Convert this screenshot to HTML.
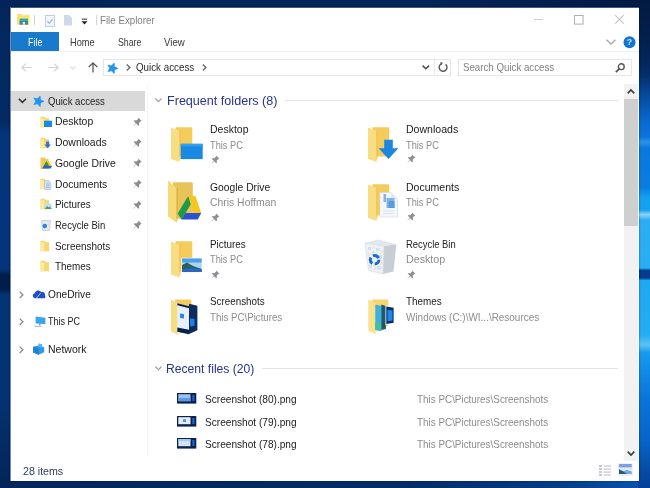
<!DOCTYPE html>
<html lang="en"><head><meta charset="utf-8"><title>File Explorer</title>
<style>
html,body{margin:0;padding:0}
body{width:650px;height:488px;position:relative;overflow:hidden;background:#0a2656;font-family:"Liberation Sans",sans-serif}
.t{position:absolute;white-space:pre;line-height:1;transform-origin:0 0;display:block}
.a{position:absolute;display:block}
svg{position:absolute;overflow:visible}

</style></head>
<body>
<div class="a" style="left:0px;top:0px;width:650px;height:488px;background:linear-gradient(90deg,#03265c 0px,#042c66 400px,#053c88 560px,#0656b4 650px);"></div>
<div class="a" style="left:0px;top:0px;width:650px;height:8px;background:linear-gradient(90deg,#03245a,#032558 420px,#032050 520px,#021a42 650px);"></div>
<div class="a" style="left:0px;top:0px;width:11px;height:488px;background:linear-gradient(180deg,#03245a 0px,#032960 40px,#032a62 122px,#04347a 134px,#04357c 269px,#021d4a 275px,#021d4a 289px,#043476 295px,#043272 400px,#042a62 450px,#032558 488px);"></div>
<div class="a" style="left:638px;top:0px;width:12px;height:488px;background:linear-gradient(180deg,#021a40 0px,#03204e 40px,#03265c 62px,#04306c 76px,#0650a8 100px,#0868cc 120px,#0a74dc 137px,#2c92e8 142px,#0a78dc 148px,#0a7ee0 188px,#12a0f0 197px,#14a2f0 210px,#8ad4fa 214.500px,#2cacf3 220px,#28aef4 268px,#053c90 270.500px,#053c90 278px,#1ea8f2 280.500px,#24acf4 335px,#5cc2f8 345px,#1a9cee 352px,#1290e8 365px,#0a74d8 400px,#0764c8 440px,#054ca6 470px,#05409a 488px);"></div>
<div class="a" id="win" style="left:0;top:0;width:650px;height:488px;filter:blur(0.55px)">
<div class="a" style="left:10px;top:7px;width:629px;height:474px;background:#fff;box-sizing:border-box;border-left:1px solid #7688ab;border-top:1px solid #44597f;box-shadow:0 0 2px 0.300px rgba(0,8,34,.5);"></div>
<svg style="left:16.8px;top:14px" width="13" height="11" viewBox="0 0 13 11"><path d="M0 1.2h12.5v9.500h-12.500z" fill="#fce46c"/><path d="M0 0.200h4.500l1 1h-5.500z" fill="#f5cf55"/><path d="M7.500 0.600h5v1h-5z" fill="#f8e48c"/><rect x="2.600" y="4.600" width="8.400" height="3" fill="#3aa89a"/><rect x="2.600" y="7" width="8.400" height="3.700" fill="#2a86c8"/><rect x="5.700" y="7.800" width="2.300" height="2.900" fill="#fbe88e"/></svg>
<div class="a" style="left:34px;top:14.5px;width:1px;height:10px;background:#d4d4d4;"></div>
<div class="a" style="left:95.5px;top:14.5px;width:1px;height:10px;background:#d4d4d4;"></div>
<svg style="left:45px;top:14.5px" width="10" height="12" viewBox="0 0 10 12"><rect x="0.5" y="0.5" width="9" height="11" fill="#f3f6fc" stroke="#c2cee8"/><path d="M2.4 6.2l2 2.1 3.4-4.3" fill="none" stroke="#abbce2" stroke-width="1.4"/></svg>
<svg style="left:64.2px;top:14.8px" width="8" height="10.5" viewBox="0 0 8 10.5"><path d="M0 0h5l3 3v7.500h-8z" fill="#cfd9ec"/></svg>
<svg style="left:80.7px;top:18px" width="7" height="8" viewBox="0 0 7 8"><rect x="0.8" y="0.6" width="5.4" height="1.1" fill="#444"/><path d="M0.5 3.2h6l-3 3.3z" fill="#222"/></svg>
<div class="a" style="left:534.3px;top:19.3px;width:9px;height:1px;background:#cccccc;"></div>
<svg style="left:573.5px;top:15px" width="10" height="10" viewBox="0 0 10 10"><rect x="0.5" y="0.5" width="8.6" height="8.6" fill="none" stroke="#b0b0b0" stroke-width="1"/></svg>
<svg style="left:614.7px;top:15.4px" width="9" height="9" viewBox="0 0 9 9"><path d="M0.200 0.200l8.500 8.500M8.700 0.200l-8.500 8.500" fill="none" stroke="#c2c2c2" stroke-width="1.100"/></svg>
<div class="a" style="left:11px;top:32px;width:47.8px;height:19.4px;background:#1979ca;"></div>
<div class="a" style="left:11px;top:51px;width:627.5px;height:1px;background:#f0f0f1;"></div>
<svg style="left:605.8px;top:38.9px" width="10" height="6" viewBox="0 0 10 6"><path d="M0.500 0.700l4.500 4.300 4.500-4.300" fill="none" stroke="#a9a9a9" stroke-width="1.300"/></svg>
<svg style="left:623.3px;top:36px" width="13" height="13" viewBox="0 0 13 13"><circle cx="6.500" cy="6.200" r="6" fill="#1275d6"/><text x="6.500" y="9.400" text-anchor="middle" font-family="Liberation Sans, sans-serif" font-size="8.800" font-weight="bold" fill="#cfe6ff">?</text></svg>
<svg style="left:21px;top:62.5px" width="11" height="9" viewBox="0 0 11 9"><path d="M10.6 4.5H1M4.8 0.6L0.9 4.5l3.9 3.9" fill="none" stroke="#d2d2d2" stroke-width="1.2"/></svg>
<svg style="left:47.5px;top:62.5px" width="11" height="9" viewBox="0 0 11 9"><path d="M0.4 4.5H10M6.2 0.6l3.9 3.9-3.9 3.9" fill="none" stroke="#d2d2d2" stroke-width="1.2"/></svg>
<svg style="left:70px;top:66px" width="6" height="4" viewBox="0 0 6 4"><path d="M0.5 0.5l2.5 2.5 2.5-2.5" fill="none" stroke="#dcdcdc" stroke-width="1.1"/></svg>
<svg style="left:87.5px;top:61.8px" width="10" height="11" viewBox="0 0 10 11"><path d="M5 10.4V1M0.8 5l4.2-4.2 4.2 4.2" fill="none" stroke="#5a5a5a" stroke-width="1.3"/></svg>
<div class="a" style="left:103px;top:59px;width:347.5px;height:17px;background:#fff;box-sizing:border-box;border:1px solid #e6e6e6;"></div>
<div class="a" style="left:434px;top:60px;width:1px;height:15px;background:#ececec;"></div>
<svg style="left:106.6px;top:62.8px" width="11" height="11" viewBox="0 0 11 11"><path d="M7.13 -0.03L7.58 3.71L11.00 5.30L7.58 6.89L7.13 10.63L4.57 7.87L0.87 8.59L2.70 5.30L0.87 2.01L4.57 2.73z" fill="#2196ee" stroke="#2196ee" stroke-width=".6" stroke-linejoin="round"/></svg>
<svg style="left:125.5px;top:64.2px" width="5" height="7" viewBox="0 0 5 7"><path d="M0.8 0.6l3 2.9-3 2.9" fill="none" stroke="#6a6a6a" stroke-width="1.4"/></svg>
<svg style="left:201.5px;top:64.2px" width="5" height="7" viewBox="0 0 5 7"><path d="M0.8 0.6l3 2.9-3 2.9" fill="none" stroke="#6a6a6a" stroke-width="1.4"/></svg>
<svg style="left:421.8px;top:65.2px" width="8" height="5" viewBox="0 0 8 5"><path d="M0.6 0.6l3.2 3.2L7 0.6" fill="none" stroke="#4d4d4d" stroke-width="1.5"/></svg>
<svg style="left:437.5px;top:62.3px" width="10" height="11" viewBox="0 0 10 11"><path d="M7.6 2.4A3.9 3.9 0 1 1 3.3 1.9" fill="none" stroke="#555" stroke-width="1.4"/><path d="M2 0.2l2.9 0.3-1.4 2.7z" fill="#555"/></svg>
<div class="a" style="left:458px;top:59px;width:173.5px;height:17px;background:#fff;box-sizing:border-box;border:1px solid #e6e6e6;"></div>
<svg style="left:614.5px;top:62.5px" width="10" height="10" viewBox="0 0 10 10"><circle cx="6.3" cy="3.7" r="2.9" fill="none" stroke="#555" stroke-width="1.4"/><path d="M4.2 5.8L0.8 9.2" stroke="#555" stroke-width="1.8" fill="none"/></svg>
<div class="a" style="left:11px;top:90.6px;width:133.8px;height:20.4px;background:#d9d9d9;"></div>
<div class="a" style="left:147px;top:84px;width:1px;height:372px;background:#f4f4f4;"></div>
<svg style="left:17.5px;top:98.3px" width="9" height="6" viewBox="0 0 9 6"><path d="M0.8 0.8l3.6 3.6L8 0.8" fill="none" stroke="#333" stroke-width="1.5"/></svg>
<svg style="left:33.2px;top:96px" width="11" height="11" viewBox="0 0 11 11"><path d="M7.13 -0.03L7.58 3.71L11.00 5.30L7.58 6.89L7.13 10.63L4.57 7.87L0.87 8.59L2.70 5.30L0.87 2.01L4.57 2.73z" fill="#2196ee" stroke="#2196ee" stroke-width=".6" stroke-linejoin="round"/></svg>
<svg style="left:18.5px;top:290.5px" width="5" height="8" viewBox="0 0 5 8"><path d="M0.7 0.6l3.2 3.2-3.2 3.2" fill="none" stroke="#8a8a8a" stroke-width="1.300"/></svg>
<svg style="left:18.5px;top:318.2px" width="5" height="8" viewBox="0 0 5 8"><path d="M0.7 0.6l3.2 3.2-3.2 3.2" fill="none" stroke="#8a8a8a" stroke-width="1.300"/></svg>
<svg style="left:18.5px;top:345.7px" width="5" height="8" viewBox="0 0 5 8"><path d="M0.7 0.6l3.2 3.2-3.2 3.2" fill="none" stroke="#8a8a8a" stroke-width="1.300"/></svg>
<svg style="left:133px;top:117.1px" width="9.2" height="9.7" viewBox="0 0 8 8.500"><path d="M4.6 0.4l3 3-.9.3-1.5 1.6.2 1.7-.8.7-1.9-1.9L.5 8 .3 7.7l2.2-2.2L.6 3.600l.7-.8 1.700.2L4.600 1.500z" fill="#8c8c8c"/></svg>
<svg style="left:133px;top:137.7px" width="9.2" height="9.7" viewBox="0 0 8 8.500"><path d="M4.6 0.4l3 3-.9.3-1.5 1.6.2 1.7-.8.7-1.9-1.9L.5 8 .3 7.7l2.2-2.2L.6 3.600l.7-.8 1.700.2L4.600 1.500z" fill="#8c8c8c"/></svg>
<svg style="left:133px;top:158.29999999999998px" width="9.2" height="9.7" viewBox="0 0 8 8.500"><path d="M4.6 0.4l3 3-.9.3-1.5 1.6.2 1.7-.8.7-1.9-1.9L.5 8 .3 7.7l2.2-2.2L.6 3.600l.7-.8 1.700.2L4.600 1.500z" fill="#8c8c8c"/></svg>
<svg style="left:133px;top:178.9px" width="9.2" height="9.7" viewBox="0 0 8 8.500"><path d="M4.6 0.4l3 3-.9.3-1.5 1.6.2 1.7-.8.7-1.9-1.9L.5 8 .3 7.7l2.2-2.2L.6 3.600l.7-.8 1.700.2L4.600 1.500z" fill="#8c8c8c"/></svg>
<svg style="left:133px;top:199.5px" width="9.2" height="9.7" viewBox="0 0 8 8.500"><path d="M4.6 0.4l3 3-.9.3-1.5 1.6.2 1.7-.8.7-1.9-1.9L.5 8 .3 7.7l2.2-2.2L.6 3.600l.7-.8 1.700.2L4.600 1.500z" fill="#8c8c8c"/></svg>
<svg style="left:133px;top:220.1px" width="9.2" height="9.7" viewBox="0 0 8 8.500"><path d="M4.6 0.4l3 3-.9.3-1.5 1.6.2 1.7-.8.7-1.9-1.9L.5 8 .3 7.7l2.2-2.2L.6 3.600l.7-.8 1.700.2L4.600 1.500z" fill="#8c8c8c"/></svg>
<svg style="left:40px;top:116px" width="12" height="12" viewBox="0 0 12 12"><path d="M0.5 0.8h4.3l1.2 1.4h3v9h-8.500z" fill="#f8d771"/><path d="M0.5 2.200h3.800v8.600l-3.800.4z" fill="#fde9a0"/><rect x="4" y="4.700" width="8" height="6.300" fill="#1b8be2"/></svg>
<svg style="left:40px;top:136.6px" width="12" height="12" viewBox="0 0 12 12"><path d="M0.5 0.8h4.3l1.2 1.4h3v9h-8.500z" fill="#f8d771"/><path d="M0.5 2.200h3.800v8.600l-3.800.4z" fill="#fde9a0"/><path d="M6.200 4.600h3v3h1.800l-3.300 3.600-3.300-3.600h1.800z" fill="#2a78d0"/></svg>
<svg style="left:39.5px;top:156.7px" width="13" height="13" viewBox="0 0 13 13"><path d="M0.5 0.500h4.300l1.200 1.400h2.500v10h-8z" fill="#f0c95a"/><path d="M6.500 4l3 5h-6z" fill="#3a8f3a"/><path d="M6.500 4l2.200 0 3.300 5.400h-2.500z" fill="#f5c518"/><path d="M3.500 9h8.500l-1.300 2.500h-8.500z" fill="#2a62c8"/></svg>
<svg style="left:40px;top:177.8px" width="12" height="12" viewBox="0 0 12 12"><path d="M0.5 0.8h4.3l1.2 1.4h3v9h-8.500z" fill="#f8d771"/><path d="M0.5 2.200h3.800v8.600l-3.800.4z" fill="#fde9a0"/><path d="M4.600 2.800h4.200l2 2v6.700h-6.200z" fill="#cfe0f4" stroke="#a9c0de" stroke-width=".6"/><path d="M6 6h3.500M6 7.800h3.500M6 9.500h3.500" stroke="#8fb0de" stroke-width=".7"/></svg>
<svg style="left:40px;top:198.4px" width="12" height="12" viewBox="0 0 12 12"><path d="M0.5 0.8h4.3l1.2 1.4h3v9h-8.500z" fill="#f8d771"/><path d="M0.5 2.200h3.800v8.600l-3.800.4z" fill="#fde9a0"/><rect x="4.600" y="5.500" width="7" height="5.500" fill="#bfe0f5"/><path d="M4.600 11l2.500-3 1.800 1.600 1.200-1 1.500 2.400z" fill="#4f9a6a"/></svg>
<svg style="left:40px;top:219px" width="12" height="12" viewBox="0 0 12 12"><path d="M1.500 1.500h9l-1.200 10h-6.600z" fill="#e4e9ee" stroke="#b9c2cc" stroke-width=".7"/><circle cx="4.800" cy="7" r="2.300" fill="#2d86d8"/></svg>
<svg style="left:40px;top:239.6px" width="12" height="12" viewBox="0 0 12 12"><path d="M0.5 0.8h4.3l1.2 1.4h3v9h-8.500z" fill="#f8d771"/><path d="M0.5 2.200h3.800v8.600l-3.800.4z" fill="#fde9a0"/></svg>
<svg style="left:40px;top:260.2px" width="12" height="12" viewBox="0 0 12 12"><path d="M0.5 0.8h4.3l1.2 1.4h3v9h-8.500z" fill="#f8d771"/><path d="M0.5 2.200h3.800v8.600l-3.800.4z" fill="#fde9a0"/></svg>
<svg style="left:32px;top:289.5px" width="13.5" height="8.5" viewBox="0 0 13.5 8.5"><path d="M3 8.300a2.600 2.600 0 0 1-.3-5.100A3.600 3.600 0 0 1 9.200 2 3 3 0 0 1 13 5.300a1.800 1.800 0 0 1-1.200 3z" fill="#1f4fc6"/><path d="M4.200 8.300L8.600 3.200" stroke="#fff" stroke-width=".7"/></svg>
<svg style="left:33px;top:316px" width="13" height="11.5" viewBox="0 0 13 11.5"><path d="M2.600 0.500l9.800 1.200v6.600l-9.800-.8z" fill="#3aa6ea"/><path d="M0.500 9.600l7.500.6 2 .9-7.800-.3z" fill="#9fb6c8"/><path d="M6 7.800l1.500.1v1.800l-1.500-.1z" fill="#7f9fb8"/></svg>
<svg style="left:32px;top:342.5px" width="13" height="12.5" viewBox="0 0 13 12.5"><path d="M1.200 3.800l6-1.600 5 2v5l-5.500 2.600-5.500-2.400z" fill="#2d9be6"/><path d="M6.500 0.300l3.500 1 0 3.200-3.500-.8z" fill="#56b4f0"/><path d="M1.200 3.800l5.500 1.800v6.200l-5.500-2.400z" fill="#1b82d6"/></svg>
<svg style="left:155.3px;top:98.2px" width="7" height="5" viewBox="0 0 7 5"><path d="M0.400 0.500l3.100 3.200L6.600 0.500" fill="none" stroke="#a4a4a4" stroke-width="1.200"/></svg>
<svg style="left:155.3px;top:366px" width="7" height="5" viewBox="0 0 7 5"><path d="M0.400 0.500l3.100 3.200L6.600 0.500" fill="none" stroke="#a4a4a4" stroke-width="1.200"/></svg>
<div class="a" style="left:285px;top:100px;width:333px;height:1px;background:#e5e5e5;"></div>
<div class="a" style="left:261.5px;top:368px;width:356.5px;height:1px;background:#e5e5e5;"></div>
<svg style="left:171.2px;top:127.3px" width="34" height="35.5" viewBox="0 0 34 35.5"><path d="M4.5 0.300h16.0l.8 .8v28.5h-16.8z" fill="#f4cc5c"/><path d="M0 0.500l8.5 3.200v31.3l-8.5-3z" fill="#f9dd82"/><path d="M8.5 3.700l1-.5v28.0l-1 2.800z" fill="#ecc050"/><rect x="9.700" y="16.800" width="22" height="15.300" fill="#198ae4"/><rect x="9.700" y="16.800" width="22" height="2.500" fill="#349ff0"/></svg>
<svg style="left:367.6px;top:126.8px" width="34" height="35.5" viewBox="0 0 34 35.5"><path d="M4.5 0.300h16.0l.8 .8v28.5h-16.8z" fill="#f4cc5c"/><path d="M0 0.500l8.5 3.200v31.3l-8.5-3z" fill="#f9dd82"/><path d="M8.5 3.700l1-.5v28.0l-1 2.800z" fill="#ecc050"/><path d="M16.200 12.800h8.600v8.400h5.600l-9.900 10.800-9.900-10.800h5.600z" fill="#1d86e0"/></svg>
<svg style="left:166.5px;top:179.5px" width="36" height="44" viewBox="0 0 36 44"><path d="M6 2.200h19l.8 1v35.500h-19.800z" fill="#e7c359"/><path d="M1 0.300l8.600 8v34.500l-8.600-6.300z" fill="#f5da76"/><path d="M9.600 8.300l1-.3v31l-1 3.800z" fill="#d9ab3c"/><path d="M21.200 16l-10.500 17.500 3.800 6 10.700-17.500z" fill="#1d9a48"/><path d="M21.200 16h7.300l5.700 17h-7.900z" fill="#f6c61e"/><path d="M14.500 39.500l3.900-6.500h15.800l-3.400 6.500z" fill="#2a52cf"/></svg>
<svg style="left:367.6px;top:183.8px" width="34" height="37.5" viewBox="0 0 34 37.5"><path d="M4.5 0.300h16.0l.8 .8v30.5h-16.8z" fill="#f4cc5c"/><path d="M0 0.500l8.5 3.200v33.3l-8.5-3z" fill="#f9dd82"/><path d="M8.5 3.700l1-.5v30.0l-1 2.800z" fill="#ecc050"/><path d="M12 8.500h11l6.500 6.500v18h-17.500z" fill="#f4f8fd" stroke="#d3dcea" stroke-width=".7"/><path d="M23 8.500v6.500h6.500z" fill="#e0e8f3"/><rect x="18.500" y="14" width="8" height="10" fill="#7db6ea"/><rect x="20.500" y="17" width="6" height="7" fill="#5a9ade"/><rect x="15.500" y="10" width="2.600" height="8" fill="#8db2e2"/><path d="M15 27h11.500M15 29.500h11.500" stroke="#dbe3ee" stroke-width="1"/></svg>
<svg style="left:171.2px;top:241px" width="34" height="37" viewBox="0 0 34 37"><path d="M4.5 0.300h16.0l.8 .8v30h-16.8z" fill="#f4cc5c"/><path d="M0 0.500l8.5 3.200v32.8l-8.5-3z" fill="#f9dd82"/><path d="M8.5 3.700l1-.5v29.5l-1 2.800z" fill="#ecc050"/><rect x="10.300" y="16.800" width="21" height="15" fill="#fff"/><rect x="11" y="17.500" width="19.600" height="13.600" fill="#a8d4f4"/><rect x="11" y="17.500" width="19.600" height="4" fill="#4c9fe8"/><path d="M11 31.100v-7l5-2.500 6 3.500 8.600 3v3z" fill="#2c5f5e"/><path d="M11 31.100v-2.500l9-1.500 10.600 1v3z" fill="#2a68c4"/></svg>
<svg style="left:364px;top:239px" width="34" height="37" viewBox="0 0 34 37"><path d="M1 4l19 3-1 28-14.500-3.500z" fill="#edf2f7"/><path d="M20 7l12.400-1.700-2.900 27.200-10.500 2.500z" fill="#c9ced6"/><path d="M1 4l13-3.500 18.400 4.800-12.400 1.700z" fill="#e1e7ee"/><path d="M1 4l19 3-1 28-14.500-3.500z" fill="none" stroke="#d2d9e1" stroke-width=".6"/><g fill="#cfe2f6"><rect x="4" y="8" width="3" height="3"/><rect x="12" y="9" width="3.500" height="3"/><rect x="15" y="16" width="3" height="4"/><rect x="5" y="26" width="3" height="3"/><rect x="13" y="27" width="4" height="3.500"/><rect x="8" y="12" width="2.500" height="2.500"/></g><g fill="#f6e3d6"><rect x="8.500" y="7.500" width="2.500" height="2.500"/><rect x="16" y="11.500" width="2.500" height="3"/><rect x="9.500" y="28" width="3" height="3"/><rect x="3.500" y="14" width="2.500" height="3"/><rect x="16" y="22.500" width="2.500" height="3"/></g><circle cx="10.600" cy="20.800" r="4.300" fill="none" stroke="#1a6ccc" stroke-width="3" stroke-dasharray="6.500 2.500"/></svg>
<svg style="left:171.2px;top:298.6px" width="30" height="38" viewBox="0 0 30 38"><path d="M4 0.500h15.500l.8 .8v28h-16.300z" fill="#f4cc5c"/><path d="M0 0.700l7.300 3v32l-7.300-3z" fill="#f9dd82"/><path d="M6.300 4.200l11.700 3v28l-11.700-2.500z" fill="#e7effa"/><path d="M6.300 4.200l11.700 3v2l-11.700-3z" fill="#0b2048"/><path d="M6.300 28.500l11.700 2.200v4.500l-11.700-2.500z" fill="#0b2048"/><path d="M9 14.500l4 .6v4.400l-4-.4z" fill="#2f86dc"/><path d="M18 4.800l8.400 2v24.500l-8.400 3.700z" fill="#0d2b5e"/><path d="M19 19.500l4.500 .3v7l-4.500 .8z" fill="#1c82e2"/></svg>
<svg style="left:367.8px;top:298.6px" width="30" height="38" viewBox="0 0 30 38"><path d="M4 0.500h15.500l.8 .8v26h-16.300z" fill="#f6d56e"/><path d="M0.300 0.700l7.300 3v31l-7.300-3z" fill="#fae18c"/><path d="M7.300 5.500l6 1.500v25l-6-1z" fill="#3cb2e2"/><path d="M7.300 23l6 1v8l-6-1z" fill="#46bea0"/><path d="M13.300 5.500l4.600 1.500v23l-4.600 1z" fill="#1c5870"/><path d="M17.500 6.500l8.800 1.500v16.500l-8.800 1.500z" fill="#f4f7fb"/><path d="M18.300 7.500l7.300 1.200v15l-7.300 1.200z" fill="#0b2c66"/><path d="M19.500 11l5 .6v10l-5 .6z" fill="#1b8af0"/></svg>
<svg style="left:210.8px;top:154.7px" width="9" height="9" viewBox="0 0 8 8.500"><path d="M4.6 0.4l3 3-.9.3-1.5 1.6.2 1.7-.8.7-1.9-1.9L.5 8 .3 7.7l2.2-2.2L.6 3.600l.7-.8 1.700.2L4.600 1.500z" fill="#8c9096"/></svg>
<svg style="left:210.8px;top:212.5px" width="9" height="9" viewBox="0 0 8 8.500"><path d="M4.6 0.4l3 3-.9.3-1.5 1.6.2 1.7-.8.7-1.9-1.9L.5 8 .3 7.7l2.2-2.2L.6 3.600l.7-.8 1.700.2L4.600 1.500z" fill="#8c9096"/></svg>
<svg style="left:210.8px;top:269.7px" width="9" height="9" viewBox="0 0 8 8.500"><path d="M4.6 0.4l3 3-.9.3-1.5 1.6.2 1.7-.8.7-1.9-1.9L.5 8 .3 7.7l2.2-2.2L.6 3.600l.7-.8 1.700.2L4.600 1.500z" fill="#8c9096"/></svg>
<svg style="left:406.8px;top:154.0px" width="9" height="9" viewBox="0 0 8 8.500"><path d="M4.6 0.4l3 3-.9.3-1.5 1.6.2 1.7-.8.7-1.9-1.9L.5 8 .3 7.7l2.2-2.2L.6 3.600l.7-.8 1.700.2L4.600 1.500z" fill="#8c9096"/></svg>
<svg style="left:406.8px;top:211.7px" width="9" height="9" viewBox="0 0 8 8.500"><path d="M4.6 0.4l3 3-.9.3-1.5 1.6.2 1.7-.8.7-1.9-1.9L.5 8 .3 7.7l2.2-2.2L.6 3.600l.7-.8 1.700.2L4.600 1.500z" fill="#8c9096"/></svg>
<svg style="left:406.8px;top:269.7px" width="9" height="9" viewBox="0 0 8 8.500"><path d="M4.6 0.4l3 3-.9.3-1.5 1.6.2 1.7-.8.7-1.9-1.9L.5 8 .3 7.7l2.2-2.2L.6 3.600l.7-.8 1.700.2L4.600 1.500z" fill="#8c9096"/></svg>
<svg style="left:176.8px;top:393.2px" width="19.3" height="10.6" viewBox="0 0 19.3 10.6"><rect x="0" y="0" width="19.300" height="10.600" fill="#0b2250"/><rect x="1.300" y="1.200" width="12.200" height="7" fill="#9cc2f0"/><rect x="1.300" y="5" width="12.200" height="3.200" fill="#5b9ae2"/><rect x="15.300" y="2" width="2.200" height="6" fill="#1c64c8"/></svg>
<svg style="left:176.8px;top:415.5px" width="19.3" height="10.6" viewBox="0 0 19.3 10.6"><rect x="0" y="0" width="19.300" height="10.600" fill="#0b2250"/><rect x="1.300" y="1.200" width="12.200" height="7" fill="#e3edfb"/><rect x="6" y="3.300" width="3" height="2.600" fill="#4d90e0"/><rect x="15.300" y="2" width="2.200" height="6" fill="#1c64c8"/></svg>
<svg style="left:176.8px;top:438.2px" width="19.3" height="10.6" viewBox="0 0 19.3 10.6"><rect x="0" y="0" width="19.300" height="10.600" fill="#0b2250"/><rect x="1.300" y="1.200" width="12.200" height="7" fill="#d3e4f8"/><rect x="1.300" y="1.200" width="12.200" height="2" fill="#a9c9f0"/><rect x="15.300" y="2" width="2.200" height="6" fill="#1c64c8"/></svg>
<div class="a" style="left:624.2px;top:84px;width:13.4px;height:377px;background:#f2f2f2;"></div>
<div class="a" style="left:624.2px;top:98.5px;width:13.4px;height:127.8px;background:#cecfcf;"></div>
<svg style="left:627.2px;top:89.3px" width="8" height="5" viewBox="0 0 8 5"><path d="M0.700 4.400l3.300-3.400 3.300 3.400" fill="none" stroke="#3c3c3c" stroke-width="1.600"/></svg>
<svg style="left:627.2px;top:450.5px" width="8" height="5" viewBox="0 0 8 5"><path d="M0.700 0.600l3.300 3.400 3.300-3.400" fill="none" stroke="#3c3c3c" stroke-width="1.600"/></svg>
<svg style="left:599px;top:464.5px" width="12.5" height="11.5" viewBox="0 0 12.5 11.5"><path d="M0 0h3v2h-3zM0 3h3v2h-3zM0 6h3v2h-3zM0 9h3v2h-3z" fill="#c6c8ce"/><path d="M4.500 0.300h7.500v1.600h-7.500zM4.500 3.300h7.500v1.600h-7.500zM4.500 6.300h7.500v1.600h-7.500zM4.500 9.300h7.500v1.600h-7.500z" fill="#d6d8dc"/></svg>
<div class="a" style="left:617.5px;top:463px;width:15.5px;height:12.5px;background:#e6f2fd;"></div>
<svg style="left:618.8px;top:464px" width="12.7" height="10" viewBox="0 0 12.7 10"><rect x="0" y="0" width="12.700" height="10" fill="#dfeaf8"/><rect x="0" y="0" width="12.700" height="3.400" fill="#7f9fe0"/><path d="M0 10v-4.500l4 1.500 4-1 4.700 1.500v2.500z" fill="#7aa6d2"/><path d="M0 10v-4.800l5 2.800 3 2z" fill="#2b5a74"/></svg>
<!-- text -->
<span class="t" style="left:99.9px;top:15px;font-size:10.8px;color:#808080;transform:scaleX(0.9025);">File Explorer</span>
<span class="t" style="left:27.6px;top:37px;font-size:10.6px;color:#ffffff;transform:scaleX(0.8432);">File</span>
<span class="t" style="left:70.1px;top:38px;font-size:10.4px;color:#383838;transform:scaleX(0.8875);">Home</span>
<span class="t" style="left:117.6px;top:38px;font-size:10.4px;color:#383838;transform:scaleX(0.8437);">Share</span>
<span class="t" style="left:163.8px;top:38px;font-size:10.4px;color:#383838;transform:scaleX(0.9264);">View</span>
<span class="t" style="left:135.7px;top:62px;font-size:10.8px;color:#2a2a2a;transform:scaleX(0.9065);">Quick access</span>
<span class="t" style="left:463.3px;top:62px;font-size:10.8px;color:#808080;transform:scaleX(0.8992);">Search Quick access</span>
<span class="t" style="left:47.5px;top:96px;font-size:10.8px;color:#202020;transform:scaleX(0.8847);">Quick access</span>
<span class="t" style="left:54.6px;top:116px;font-size:10.6px;color:#202020;transform:scaleX(0.9826);">Desktop</span>
<span class="t" style="left:54.6px;top:137px;font-size:10.6px;color:#202020;transform:scaleX(0.9862);">Downloads</span>
<span class="t" style="left:54.6px;top:158px;font-size:10.6px;color:#202020;transform:scaleX(0.9818);">Google Drive</span>
<span class="t" style="left:54.6px;top:179px;font-size:10.6px;color:#202020;transform:scaleX(0.9740);">Documents</span>
<span class="t" style="left:54.6px;top:199px;font-size:10.6px;color:#202020;transform:scaleX(0.9326);">Pictures</span>
<span class="t" style="left:54.6px;top:220px;font-size:10.6px;color:#202020;transform:scaleX(0.8974);">Recycle Bin</span>
<span class="t" style="left:54.6px;top:241px;font-size:10.6px;color:#202020;transform:scaleX(0.9373);">Screenshots</span>
<span class="t" style="left:54.6px;top:261px;font-size:10.6px;color:#202020;transform:scaleX(0.9326);">Themes</span>
<span class="t" style="left:47.7px;top:289px;font-size:10.6px;color:#202020;transform:scaleX(0.9564);">OneDrive</span>
<span class="t" style="left:47.9px;top:316px;font-size:10.6px;color:#202020;transform:scaleX(0.8491);">This PC</span>
<span class="t" style="left:47.9px;top:344px;font-size:10.6px;color:#202020;transform:scaleX(0.9908);">Network</span>
<span class="t" style="left:166.8px;top:94px;font-size:13.2px;color:#27348b;transform:scaleX(0.9541);">Frequent folders (8)</span>
<span class="t" style="left:166.1px;top:362px;font-size:13.2px;color:#27348b;transform:scaleX(0.9207);">Recent files (20)</span>
<span class="t" style="left:209.9px;top:124px;font-size:10.6px;color:#202020;transform:scaleX(0.9904);">Desktop</span>
<span class="t" style="left:209.9px;top:140px;font-size:10.6px;color:#8c8c8c;transform:scaleX(0.8703);">This PC</span>
<span class="t" style="left:209.9px;top:182px;font-size:10.6px;color:#202020;transform:scaleX(0.9737);">Google Drive</span>
<span class="t" style="left:209.9px;top:197px;font-size:10.6px;color:#8c8c8c;transform:scaleX(0.9805);">Chris Hoffman</span>
<span class="t" style="left:209.9px;top:239px;font-size:10.6px;color:#202020;transform:scaleX(0.9326);">Pictures</span>
<span class="t" style="left:209.9px;top:254px;font-size:10.6px;color:#8c8c8c;transform:scaleX(0.8703);">This PC</span>
<span class="t" style="left:209.9px;top:296px;font-size:10.6px;color:#202020;transform:scaleX(0.9288);">Screenshots</span>
<span class="t" style="left:209.9px;top:312px;font-size:10.6px;color:#8c8c8c;transform:scaleX(0.9152);">This PC\Pictures</span>
<span class="t" style="left:405.9px;top:124px;font-size:10.6px;color:#202020;transform:scaleX(0.9958);">Downloads</span>
<span class="t" style="left:405.9px;top:140px;font-size:10.6px;color:#8c8c8c;transform:scaleX(0.8703);">This PC</span>
<span class="t" style="left:405.9px;top:182px;font-size:10.6px;color:#202020;transform:scaleX(0.9927);">Documents</span>
<span class="t" style="left:405.9px;top:197px;font-size:10.6px;color:#8c8c8c;transform:scaleX(0.8703);">This PC</span>
<span class="t" style="left:405.9px;top:239px;font-size:10.6px;color:#202020;transform:scaleX(0.8885);">Recycle Bin</span>
<span class="t" style="left:405.9px;top:254px;font-size:10.6px;color:#8c8c8c;transform:scaleX(1.0084);">Desktop</span>
<span class="t" style="left:405.9px;top:296px;font-size:10.6px;color:#202020;transform:scaleX(0.9326);">Themes</span>
<span class="t" style="left:405.9px;top:312px;font-size:10.6px;color:#8c8c8c;transform:scaleX(0.9389);">Windows (C:)\WI...\Resources</span>
<span class="t" style="left:205.1px;top:394px;font-size:10.6px;color:#202020;transform:scaleX(0.9542);">Screenshot (80).png</span>
<span class="t" style="left:417.3px;top:394px;font-size:10.6px;color:#8c8c8c;transform:scaleX(0.9324);">This PC\Pictures\Screenshots</span>
<span class="t" style="left:205.1px;top:417px;font-size:10.6px;color:#202020;transform:scaleX(0.9542);">Screenshot (79).png</span>
<span class="t" style="left:417.3px;top:417px;font-size:10.6px;color:#8c8c8c;transform:scaleX(0.9324);">This PC\Pictures\Screenshots</span>
<span class="t" style="left:205.1px;top:439px;font-size:10.6px;color:#202020;transform:scaleX(0.9542);">Screenshot (78).png</span>
<span class="t" style="left:417.3px;top:439px;font-size:10.6px;color:#8c8c8c;transform:scaleX(0.9324);">This PC\Pictures\Screenshots</span>
<span class="t" style="left:22.8px;top:466px;font-size:10.6px;color:#2c3a5e;transform:scaleX(1.0038);">28 items</span>
</div>
</body></html>
